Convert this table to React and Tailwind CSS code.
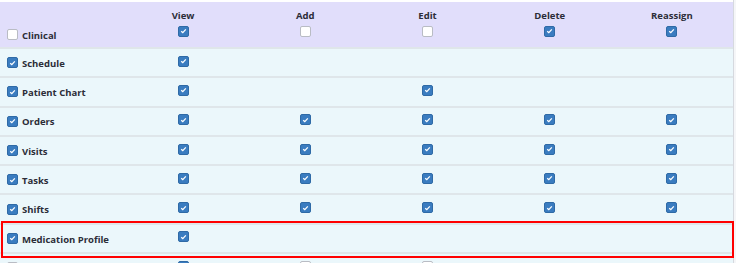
import React from "react";

const columns = ["View", "Add", "Edit", "Delete", "Reassign"];

// null = no checkbox, true = checked, false = unchecked
const rows = [
  { name: "Schedule", checked: true, perms: [true, null, null, null, null] },
  { name: "Patient Chart", checked: true, perms: [true, null, true, null, null] },
  { name: "Orders", checked: true, perms: [true, true, true, true, true] },
  { name: "Visits", checked: true, perms: [true, true, true, true, true] },
  { name: "Tasks", checked: true, perms: [true, true, true, true, true] },
  { name: "Shifts", checked: true, perms: [true, true, true, true, true] },
  { name: "Medication Profile", checked: true, perms: [true, null, null, null, null] },
  { name: "", checked: false, perms: [true, false, false, null, null] },
];

const Box = ({ checked }) =>
  checked ? (
    <span className="inline-flex h-[11px] w-[11px] items-center justify-center rounded-[2px] border border-[#2f6aa6] bg-[#3a7cc0]">
      <svg width="7" height="6" viewBox="0 0 7 6">
        <path d="M1.2 3.3 L2.8 4.6 L5.8 1.4" fill="none" stroke="#fff" strokeWidth="1.3" />
      </svg>
    </span>
  ) : (
    <span className="inline-block h-[11px] w-[11px] rounded-[2px] border border-[#b9bcc4] bg-white" />
  );

const App = () => {
  return (
    <div
      className="h-[263px] w-[736px] overflow-hidden bg-[#f5f6f8] text-[#2c2d38]"
      style={{ fontFamily: '"Open Sans", "Noto Sans", sans-serif' }}
    >
      <div className="relative w-[734px] border-r border-[#d6d9df] bg-white pt-[2px]">
        <div className="grid h-[45px] grid-cols-[122px_repeat(5,1fr)] bg-[#e1defb]">
          <div className="flex items-end gap-[4px] pb-[7px] pl-[7px]">
            <Box checked={false} />
            <span className="text-[9.5px] font-bold leading-none">Clinical</span>
          </div>
          {columns.map((c, i) => (
            <div key={c} className="flex flex-col items-center pt-[9px]">
              <span className="text-[9.5px] font-bold leading-none">{c}</span>
              <span className="mt-[5px] flex">
                <Box checked={i === 0 || i >= 3} />
              </span>
            </div>
          ))}
        </div>

        {rows.map((r, idx) => (
          <div
            key={idx}
            className="grid h-[29.3px] grid-cols-[122px_repeat(5,1fr)] border-t-2 border-[#dfe6ea] bg-[#ebf7fb]"
          >
            <div className="flex items-center gap-[4px] pl-[7px]">
              <Box checked={r.checked} />
              <span className="mt-[2px] text-[9.5px] font-bold leading-none">{r.name}</span>
            </div>
            {r.perms.map((p, i) => (
              <div key={i} className="flex items-center justify-center pb-[3px]">
                {p !== null && <Box checked={p} />}
              </div>
            ))}
          </div>
        ))}

        <div className="pointer-events-none absolute left-[1px] top-[221px] h-[37px] w-[733px] border-2 border-[#ff0000]" />
      </div>
    </div>
  );
};

export default App;
